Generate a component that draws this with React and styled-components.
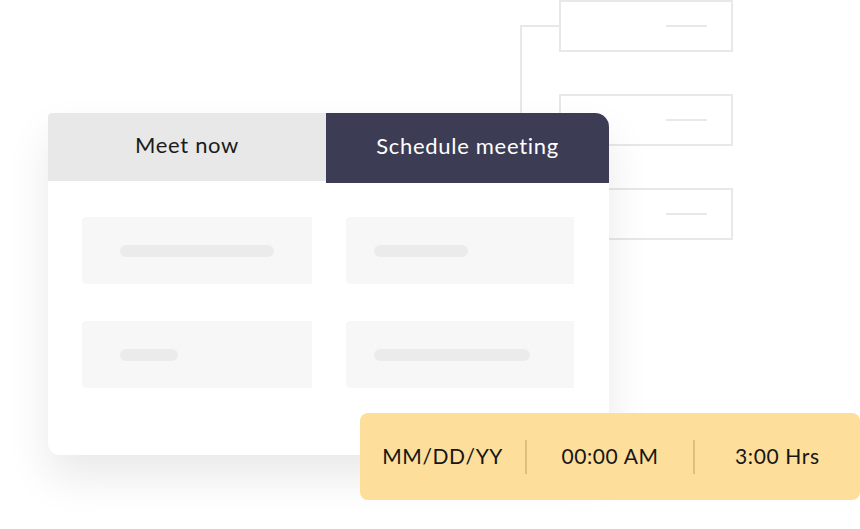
import React from "react";
import styled, { createGlobalStyle } from "styled-components";

const GlobalStyle = createGlobalStyle`
    html, body {
        margin: 0;
        padding: 0;
        background: #ffffff;
    }
    body {
        font-family: "Lato", "Open Sans", sans-serif;
        -webkit-font-smoothing: antialiased;
    }
`;

const tabs = [
    { label: "Meet now", active: false },
    { label: "Schedule meeting", active: true },
];

const placeholders = [
    { bar: 154, pad: 38 },
    { bar: 94, pad: 28 },
    { bar: 58, pad: 38 },
    { bar: 156, pad: 28 },
];

const slots = ["MM/DD/YY", "00:00 AM", "3:00 Hrs"];

const App = () => {
    return (
        <>
            <GlobalStyle />
            <Stage>
                <Tree>
                    <Trunk />
                    {[0, 1, 2].map((i) => (
                        <Branch key={i}>
                            <Node>
                                <NodeLine />
                            </Node>
                        </Branch>
                    ))}
                </Tree>

                <Card>
                    <Tabs>
                        {tabs.map((t) => (
                            <Tab key={t.label} $active={t.active}>
                                {t.label}
                            </Tab>
                        ))}
                    </Tabs>
                    <Grid>
                        {placeholders.map((p, i) => (
                            <Field key={i} $pad={p.pad}>
                                <Bar style={{ width: p.bar }} />
                            </Field>
                        ))}
                    </Grid>
                </Card>

                <TimeBar>
                    {slots.map((s, i) => (
                        <React.Fragment key={s}>
                            {i > 0 && <Divider />}
                            <Slot>{s}</Slot>
                        </React.Fragment>
                    ))}
                </TimeBar>
            </Stage>
        </>
    );
};

export default App;

const Stage = styled.div`
    position: relative;
    width: 860px;
    height: 529px;
    overflow: hidden;
`;

// decorative flow diagram behind the card
const Tree = styled.div`
    position: absolute;
    left: 520px;
    top: 0;
    display: flex;
    flex-direction: column;
    gap: 42px;
`;

const Trunk = styled.div`
    position: absolute;
    left: 0;
    top: 25px;
    width: 2px;
    height: 190px;
    background: #e8e8e8;
`;

const Branch = styled.div`
    display: flex;
    align-items: center;

    &::before {
        content: "";
        width: 39px;
        height: 2px;
        background: #e8e8e8;
    }
`;

const Node = styled.div`
    box-sizing: border-box;
    width: 174px;
    height: 52px;
    border: 2px solid #e8e8e8;
    display: flex;
    align-items: center;
    justify-content: flex-end;
    padding-right: 24px;
`;

const NodeLine = styled.div`
    width: 41px;
    height: 2px;
    background: #e8e8e8;
`;

const Card = styled.div`
    position: absolute;
    left: 48px;
    top: 113px;
    width: 561px;
    height: 342px;
    background: #ffffff;
    border-radius: 12px;
    box-shadow: 0 22px 44px rgba(0, 0, 0, 0.09);
    z-index: 1;
`;

const Tabs = styled.div`
    display: grid;
    grid-template-columns: 278px 1fr;
    height: 70px;
`;

const Tab = styled.div`
    box-sizing: border-box;
    display: flex;
    align-items: center;
    justify-content: center;
    padding-bottom: 6px;
    font-size: 22px;
    letter-spacing: 0.7px;
    color: ${(p) => (p.$active ? "#ffffff" : "#1b1b1b")};
    background: ${(p) => (p.$active ? "#3d3c55" : "#e8e8e8")};
    border-radius: ${(p) => (p.$active ? "0 14px 0 0" : "4px 0 0 0")};
    height: ${(p) => (p.$active ? "70px" : "68px")};
`;

const Grid = styled.div`
    display: grid;
    grid-template-columns: 230px 228px;
    grid-auto-rows: 67px;
    column-gap: 34px;
    row-gap: 37px;
    padding: 34px 0 0 34px;
`;

const Field = styled.div`
    display: flex;
    align-items: center;
    padding-left: ${(p) => p.$pad}px;
    background: #f7f7f7;
    border-radius: 4px 0 0 4px;
`;

const Bar = styled.div`
    height: 12px;
    border-radius: 6px;
    background: #ebebeb;
`;

const TimeBar = styled.div`
    position: absolute;
    left: 360px;
    top: 413px;
    width: 500px;
    height: 87px;
    display: flex;
    align-items: center;
    background: #fddf9b;
    border-radius: 8px;
    z-index: 2;
`;

const Slot = styled.div`
    flex: 1;
    text-align: center;
    font-size: 21px;
    letter-spacing: 0.6px;
    color: #161616;
    padding-bottom: 2px;
`;

const Divider = styled.div`
    width: 2px;
    height: 34px;
    background: #dcc07f;
`;
